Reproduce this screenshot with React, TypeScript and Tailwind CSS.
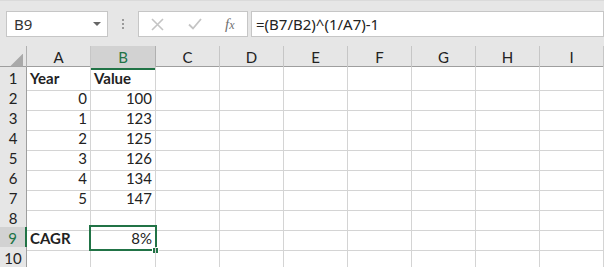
import React from "react";

const cols = ["A", "B", "C", "D", "E", "F", "G", "H", "I"];
const gridCols = "grid grid-cols-[27px_64px_65px_repeat(7,64px)]";

const rows: { a?: string; b?: string; bold?: boolean; num?: boolean }[] = [
  { a: "Year", b: "Value", bold: true },
  { a: "0", b: "100", num: true },
  { a: "1", b: "123", num: true },
  { a: "2", b: "125", num: true },
  { a: "3", b: "126", num: true },
  { a: "4", b: "134", num: true },
  { a: "5", b: "147", num: true },
  {},
  { a: "CAGR", b: "8%", bold: true },
  {},
];

function XIcon() {
  return (
    <svg width="13" height="13" viewBox="0 0 13 13">
      <path d="M1 1L12 12M12 1L1 12" stroke="#c4c4c4" strokeWidth="1.6" fill="none" />
    </svg>
  );
}

function CheckIcon() {
  return (
    <svg width="14" height="12" viewBox="0 0 14 12">
      <path d="M1 6.5L5 10.5L13 1" stroke="#c4c4c4" strokeWidth="1.8" fill="none" />
    </svg>
  );
}

export default function App() {
  return (
    <div className="w-[604px] h-[267px] overflow-hidden bg-white text-[#222]" style={{ fontFamily: "Lato, 'Noto Sans', sans-serif" }}>
      {/* toolbar */}
      <div className="h-[46px] bg-[#e6e6e6] border-t border-[#dadada] flex items-start pt-[10px]">
        <div className="ml-[6px] w-[102px] h-[26px] bg-white border border-[#c6c6c6] flex items-center pl-[7px] pr-[6px]">
          <span className="text-[15px] text-[#333]" style={{ fontFamily: "'Noto Sans', sans-serif" }}>B9</span>
          <span className="ml-auto w-0 h-0 border-l-[4px] border-r-[4px] border-t-[4px] border-l-transparent border-r-transparent border-t-[#666]" />
        </div>
        <div className="w-[30px] h-[26px] flex flex-col items-center justify-center gap-[2px]">
          <span className="w-[2px] h-[2px] bg-[#9a9a9a]" />
          <span className="w-[2px] h-[2px] bg-[#9a9a9a]" />
          <span className="w-[2px] h-[2px] bg-[#9a9a9a]" />
        </div>
        <div className="w-[110px] h-[26px] bg-white border border-[#c6c6c6] flex items-center pl-[12px]">
          <XIcon />
          <span className="ml-[24px]"><CheckIcon /></span>
          <span className="ml-[23px] italic text-[15px] text-[#707070]" style={{ fontFamily: "'Liberation Serif', serif" }}>
            f<span className="text-[12px]">x</span>
          </span>
        </div>
        <div className="ml-[3px] w-[353px] h-[26px] bg-white border border-[#c6c6c6] flex items-center pl-[4px]">
          <span className="text-[15px] text-[#222]" style={{ fontFamily: "'Noto Sans', sans-serif" }}>=(B7/B2)^(1/A7)-1</span>
        </div>
      </div>

      {/* column headers */}
      <div className={`${gridCols} h-[21px] bg-[#e6e6e6] border-b border-[#9e9e9e]`}>
        <div className="flex items-end justify-end pr-[3px] pb-[2px] border-r border-[#b0b0b0]">
          <div className="w-[13px] h-[13px] bg-[#a9a9a9] [clip-path:polygon(100%_0,100%_100%,0_100%)]" />
        </div>
        {cols.map((c) => (
          <div
            key={c}
            className={
              c === "B"
                ? "relative bg-[#d2d2d2] text-[#217346] flex items-center justify-center text-[15px] border-r border-[#b0b0b0]"
                : "flex items-center justify-center text-[15px] border-r border-[#c6c6c6]"
            }
          >
            {c}
            {c === "B" && <span className="absolute left-0 right-0 bottom-[-1px] h-[2px] bg-[#217346]" />}
          </div>
        ))}
      </div>

      {/* rows */}
      {rows.map((r, i) => {
        const sel = i === 8;
        return (
          <div key={i} className={`${gridCols} h-[20px]`}>
            <div
              className={
                sel
                  ? "bg-[#d2d2d2] text-[#217346] border-b border-[#c6c6c6] border-r-2 border-r-[#217346] flex items-center justify-center text-[15px]"
                  : "bg-[#e6e6e6] border-b border-[#c6c6c6] border-r border-r-[#9e9e9e] flex items-center justify-center text-[15px]"
              }
            >
              {i + 1}
            </div>
            <div className={`border-r border-b border-[#d4d4d4] flex items-center text-[15px] px-[3px] ${r.num ? "justify-end" : ""} ${r.bold ? "font-bold" : ""}`}>
              {r.a}
            </div>
            <div className={`relative border-r border-b border-[#d4d4d4] flex items-center text-[15px] px-[3px] ${r.num || sel ? "justify-end" : ""} ${r.bold && !sel ? "font-bold" : ""}`}>
              {r.b}
              {sel && (
                <>
                  <span className="absolute left-[-2px] top-[-2px] right-[-2px] bottom-[-1px] border-2 border-[#217346]" />
                  <span className="absolute right-[-4px] bottom-[-4px] w-[7px] h-[7px] bg-[#217346] border border-white" />
                </>
              )}
            </div>
            {cols.slice(2).map((c) => (
              <div key={c} className="border-r border-b border-[#d4d4d4]" />
            ))}
          </div>
        );
      })}
    </div>
  );
}
